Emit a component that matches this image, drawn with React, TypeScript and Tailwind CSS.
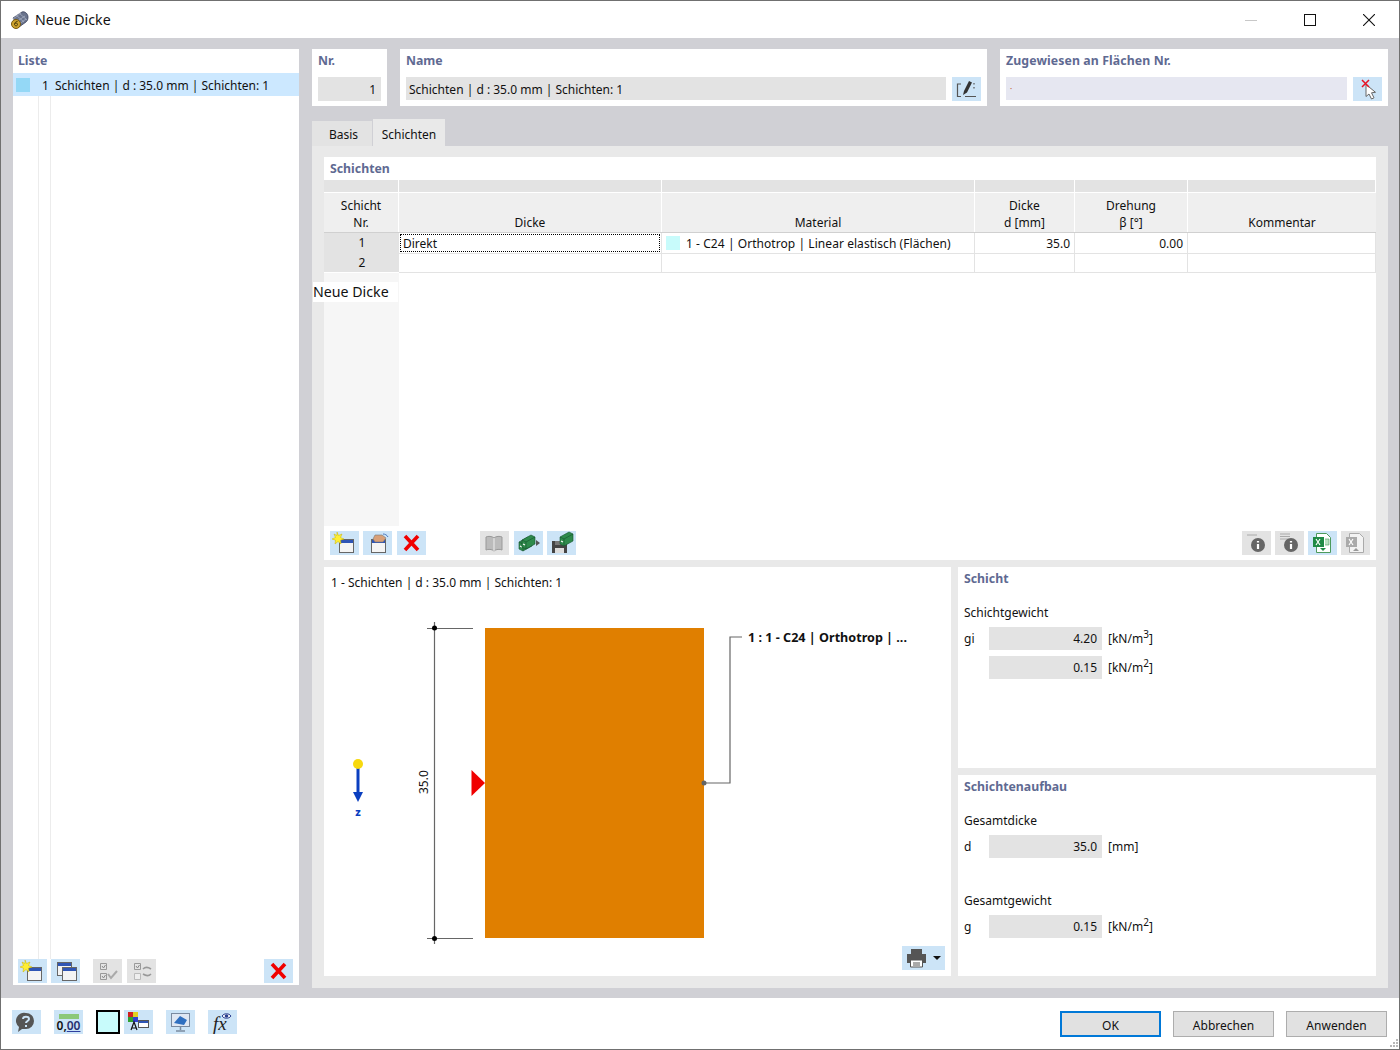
import type { ReactNode } from "react";

const sectionTitle = "text-[12.3px] font-bold text-[#5f6a92]";

function IconBtn({ children, off, className }: { children: ReactNode; off?: boolean; className?: string }) {
  return (
    <div className={`flex h-6 w-[29px] shrink-0 items-center justify-center ${off ? "bg-[#e3e3e3]" : "bg-[#cce4f7]"} ${className ?? ""}`}>
      <svg width="29" height="24" viewBox="0 0 29 24">
        {children}
      </svg>
    </div>
  );
}

const Win = ({ x = 9, y = 8 }: { x?: number; y?: number }) => (
  <g>
    <rect x={x + 0.5} y={y + 0.5} width="14" height="13" fill="#f4f4f4" stroke="#666" />
    <rect x={x + 1} y={y + 1} width="13" height="3" fill="#2f55b5" />
  </g>
);

const Star = () => <path d="M7 1l1.500 3.500L12 3l-1.500 3.500L14 8l-3.500 1.200L11 13 8 10.500 5 13l.5-3.800L2 8l3.500-1.500L4 3l3 1.500z" fill="#ffee33" stroke="#c9b400" strokeWidth="0.5" />;

const NewIcon = () => (
  <IconBtn>
    <Win />
    <Star />
  </IconBtn>
);

const RedX = ({ className }: { className?: string }) => (
  <IconBtn className={className}>
    <path d="M8 5l13 14M21 5L8 19" stroke="#f00000" strokeWidth="3.600" />
  </IconBtn>
);

const Drawer = ({ x, y }: { x: number; y: number }) => (
  <g transform={`translate(${x} ${y})`}>
    <path d="M0 5l9-5 4 2v7l-9 5-4-2z" fill="#2e8b4c" stroke="#14532d" strokeWidth="0.600" />
    <path d="M0 5l4 2v7M4 7l9-5" fill="none" stroke="#14532d" strokeWidth="0.600" />
    <path d="M1 9l2 1" stroke="#fff" strokeWidth="1.200" />
  </g>
);

const InfoIcon = ({ lines }: { lines: string }) => (
  <IconBtn off>
    <path d={lines} stroke="#aaa" />
    <circle cx="16" cy="14" r="7" fill="#666" />
    <path d="M16 10v1.500M16 13v5" stroke="#fff" strokeWidth="2.200" />
  </IconBtn>
);

const Field = ({ value }: { value: string }) => (
  <div className="flex h-[23px] w-[113px] items-center justify-end bg-[#e3e3e3] pr-[5px]">{value}</div>
);

const Unit = ({ base, sup }: { base: string; sup?: string }) => (
  <span className="ml-[6px]">
    [{base}
    {sup && <sup className="text-[10px]">{sup}</sup>}]
  </span>
);

function TableRow({ no, cells }: { no: string; cells: ReactNode[] }) {
  return (
    <div className="grid h-5 shrink-0 grid-cols-[75px_263px_313px_100px_113px_188px]">
      <div className="flex items-center justify-center border-b border-white bg-[#e3e3e3] pl-px">{no}</div>
      {cells.map((c, i) => (
        <div key={i} className="flex items-center border-r border-b border-[#e3e3e3]">
          {c}
        </div>
      ))}
    </div>
  );
}

function Diagram() {
  return (
    <svg width="627" height="354" viewBox="0 0 627 354" className="block shrink-0" fontFamily="'Noto Sans', sans-serif" fontSize="12">
      <path d="M110.500 30v322" stroke="#666" strokeWidth="1.200" />
      <path d="M103 36.500h46M103 346.500h46" stroke="#666" strokeWidth="1.200" />
      <circle cx="110.500" cy="36" r="2.500" fill="#000" />
      <circle cx="110.500" cy="346.500" r="2.500" fill="#000" />
      <text transform="translate(104 202) rotate(-90)" fill="#111">35.0</text>
      <rect x="161" y="36" width="219" height="310" fill="#e07f00" />
      <path d="M147.500 178l13.500 13-13.500 13z" fill="#f00000" />
      <path d="M380 191h26V45h12" fill="none" stroke="#666" strokeWidth="1.200" />
      <circle cx="380" cy="191" r="2.500" fill="#666" />
      <text x="424" y="50" fontWeight="700" fontSize="12.600" fill="#111">1 : 1 - C24 | Orthotrop | ...</text>
      <path d="M34 175v26" stroke="#0a3fc0" strokeWidth="3" />
      <path d="M29 200h10l-5 10z" fill="#0a3fc0" />
      <circle cx="34" cy="172" r="5" fill="#f7d90f" />
      <text x="34" y="224" textAnchor="middle" fontWeight="800" fontSize="11" fill="#0a3fc0">z</text>
    </svg>
  );
}

export default function App() {
  return (
    <div className="flex h-[1050px] w-[1400px] flex-col overflow-hidden border border-[#707070] bg-white font-['Noto_Sans',sans-serif] text-[12px] text-[#111]">
      {/* title bar */}
      <div className="flex h-[37px] shrink-0 items-center pl-[9px]">
        <svg width="20" height="20" viewBox="0 0 20 20">
          <path d="M3 8l9-6c3-1 6 2 6 5s-1 4-2 5l-7 5z" fill="#69738c" stroke="#39405a" strokeWidth="0.800" />
          <path d="M6 5l8 7M9 3l8 7M3 9l8-6M6 12l9-6M8 15l8-6" stroke="#aeb6c8" strokeWidth="0.700" />
          <circle cx="6" cy="14" r="4.500" fill="#cfa42e" stroke="#7a5a10" />
          <path d="M7.500 11.500c-2 0-3 1.500-3 3s3 2 3 0-2-1.500-3-.5" fill="none" stroke="#4a3a08" />
        </svg>
        <span className="ml-[5px] text-[14.2px]">Neue Dicke</span>
        <div className="ml-auto flex items-center">
          <svg width="12" height="12" viewBox="0 0 12 12" className="mr-[47px]">
            <path d="M0 6.500h12" stroke="#c8c8c8" />
          </svg>
          <svg width="12" height="12" viewBox="0 0 12 12" className="mr-[47px]">
            <rect x="0.500" y="0.500" width="11" height="11" fill="none" stroke="#111" />
          </svg>
          <svg width="12" height="12" viewBox="0 0 12 12" className="mr-[24px]">
            <path d="M0 0l12 12M12 0L0 12" stroke="#111" strokeWidth="1.100" />
          </svg>
        </div>
      </div>

      {/* main area */}
      <div className="flex h-[960px] shrink-0 gap-[13px] bg-[#d0d0d5] pt-[11px] pl-[12px]">
        {/* list */}
        <div className="flex h-[936px] w-[286px] flex-col bg-white">
          <div className={`${sectionTitle} flex h-6 items-center pl-[5px]`}>Liste</div>
          <div className="flex h-[23px] items-center bg-[#cce8ff]">
            <div className="ml-[3px] h-[14px] w-[14px] bg-[#94d8f6]" />
            <span className="ml-[12px] w-[13px] pt-[2px]">1</span>
            <span className="pt-[2px]">Schichten | d : 35.0 mm | Schichten: 1</span>
          </div>
          <div className="ml-[25px] h-[863px] w-[13px] border-x border-[#ececec]" />
          <div className="flex gap-1 pr-[6px] pl-[5px]">
            <NewIcon />
            <IconBtn>
              <Win x={6} y={3} />
              <Win x={11} y={8} />
            </IconBtn>
            <IconBtn off className="ml-[9px]">
              <path d="M7.500 4.500h6v6h-6zM7.500 14.500h6v6h-6z" fill="none" stroke="#999" />
              <path d="M9 7l1.500 2 2-3M9 17l1.500 2 2-3" fill="none" stroke="#888" />
              <path d="M15 15l3 4 6-7" fill="none" stroke="#aaa" strokeWidth="2" />
            </IconBtn>
            <IconBtn off className="ml-[1px]">
              <path d="M7.500 4.500h6v6h-6z" fill="none" stroke="#999" />
              <path d="M9 7l1.500 2 2-3" fill="none" stroke="#888" />
              <path d="M7.500 14.500h6v6h-6z" fill="#eee" stroke="#bbb" />
              <path d="M16 10c2-2 5-2 8 0M24 15c-2 2-5 2-8 0" fill="none" stroke="#999" strokeWidth="1.600" />
            </IconBtn>
            <RedX className="ml-auto" />
          </div>
        </div>

        {/* right column */}
        <div className="flex w-[1076px] flex-col">
          <div className="flex h-[57px] gap-[13px]">
            <div className="w-[75px] bg-white px-[6px]">
              <div className={`${sectionTitle} flex h-6 items-center`}>Nr.</div>
              <div className="mt-1 flex h-6 items-center justify-end bg-[#e3e3e3] pt-px pr-[5px]">1</div>
            </div>
            <div className="w-[587px] bg-white px-[6px]">
              <div className={`${sectionTitle} flex h-6 items-center`}>Name</div>
              <div className="mt-1 flex items-start gap-[6px]">
                <div className="flex h-[23px] w-[540px] items-center bg-[#e3e3e3] pt-[3px] pl-[3px]">Schichten | d : 35.0 mm | Schichten: 1</div>
                <IconBtn>
                  <path d="M9 7H5.500v12.500H9M13 19.500h11M22 6v1.500M22 10v1.500" fill="none" stroke="#555" strokeWidth="1.200" />
                  <path d="M11 18l1-4 5-10 3 1.500-5 10z" fill="#333" />
                </IconBtn>
              </div>
            </div>
            <div className="w-[388px] bg-white px-[6px]">
              <div className={`${sectionTitle} flex h-6 items-center tracking-[0.1px]`}>Zugewiesen an Flächen Nr.</div>
              <div className="mt-1 flex items-start gap-[6px]">
                <div className="flex h-[23px] w-[341px] items-center bg-[#e6e7f1] pl-[4px] text-[8px] text-[#c05030]">·</div>
                <IconBtn>
                  <path d="M13 7.500v12l3-2.500 2.500 5 2.500-1.200-2.500-5 4-.5z" fill="#fff" stroke="#666" />
                  <path d="M9 3l7 7M16 3L9 10" stroke="#e81123" strokeWidth="1.500" />
                </IconBtn>
              </div>
            </div>
          </div>

          {/* tabs */}
          <div className="mt-[13px] flex h-[27px] items-end gap-px">
            <div className="flex h-[25px] w-[60px] items-center justify-center bg-[#e3e3e3] pt-[2px] pl-[3px]">Basis</div>
            <div className="flex h-[27px] w-[72px] items-center justify-center bg-[#e9e9e9] pt-1">Schichten</div>
          </div>

          <div className="relative flex h-[842px] flex-col gap-[7px] bg-[#e9e9e9] p-3 pt-[11px]">
            <div className="flex h-[403px] flex-col bg-white">
              <div className={`${sectionTitle} flex h-[23px] shrink-0 items-center pt-[2px] pl-[6px]`}>Schichten</div>
              <div className="grid h-[13px] shrink-0 grid-cols-[75px_263px_313px_100px_113px_188px] border-b border-white bg-[#e3e3e3]">
                {[0, 1, 2, 3, 4, 5].map((i) => (
                  <div key={i} className="border-r border-white" />
                ))}
              </div>
              <div className="grid h-10 shrink-0 grid-cols-[75px_263px_313px_100px_113px_188px] border-b border-[#d0d0d0] bg-[#efefef] text-center leading-[17px]">
                <div className="border-r border-white pt-[4px]">
                  Schicht
                  <br />
                  Nr.
                </div>
                <div className="flex items-end justify-center border-r border-white pb-px">Dicke</div>
                <div className="flex items-end justify-center border-r border-white pb-px">Material</div>
                <div className="border-r border-white pt-[4px]">
                  Dicke
                  <br />d [mm]
                </div>
                <div className="border-r border-white pt-[4px]">
                  Drehung
                  <br />β [°]
                </div>
                <div className="flex items-end justify-center pb-px">Kommentar</div>
              </div>
              <TableRow
                no="1"
                cells={[
                  <div className="ml-px flex h-[18px] w-[260px] items-center border border-dotted border-black pt-[2px] pl-[2px]">Direkt</div>,
                  <div className="flex items-center pl-[4px]">
                    <div className="h-[14px] w-[14px] bg-[#c8fbfb]" />
                    <span className="ml-[6px] pt-[2px] tracking-[0.06px]">1 - C24 | Orthotrop | Linear elastisch (Flächen)</span>
                  </div>,
                  <div className="w-full pt-[2px] pr-[4px] text-right">35.0</div>,
                  <div className="w-full pt-[2px] pr-[4px] text-right">0.00</div>,
                  <div />,
                ]}
              />
              <TableRow no="2" cells={[<div />, <div />, <div />, <div />, <div />]} />
              <div className="h-[253px] w-[75px] shrink-0 bg-[#f6f6f6]" />
              <div className="flex items-center gap-1 pt-[5px] pl-[6px]">
                <NewIcon />
                <IconBtn>
                  <Win x={8} y={8} />
                  <path d="M10 8l2-4h7l4 3-3 4h-8z" fill="#d9a078" stroke="#777" strokeWidth="0.600" />
                  <path d="M20 3c2 0 4 1 5 3" fill="none" stroke="#4a78c0" />
                </IconBtn>
                <RedX className="ml-[1px]" />
                <IconBtn off className="ml-[50px]">
                  <path d="M14 7c-2-2-6-2-8-1v13c2-1 6-1 8 1 2-2 6-2 8-1V6c-2-1-6-1-8 1z" fill="#bbb" stroke="#999" />
                  <path d="M14 7v13" stroke="#eee" />
                </IconBtn>
                <IconBtn className="ml-[1px]">
                  <Drawer x={5} y={6} />
                  <Drawer x={8} y={4} />
                  <path d="M22 9l4 3-4 3z" fill="#555" />
                </IconBtn>
                <IconBtn>
                  <path d="M5 10h13l2 2v10H5z" fill="#444" />
                  <rect x="8" y="17" width="9" height="5" fill="#ddd" />
                  <rect x="8" y="10" width="7" height="4" fill="#777" />
                  <Drawer x={13} y={1} />
                </IconBtn>
                <div className="ml-auto flex gap-1 pr-[6px]">
                  <InfoIcon lines="M5 4h10" />
                  <InfoIcon lines="M5 3h10M5 5.500h10M5 8h8" />
                  <IconBtn>
                    <path d="M8.500 2.500h10l4 4v15h-14z" fill="#fff" stroke="#4c9a5c" />
                    <rect x="5" y="6" width="11" height="10" fill="#1f8a45" />
                    <path d="M8 8l4 6M12 8l-4 6" stroke="#fff" strokeWidth="1.200" />
                    <path d="M17 8h4v6h-4" fill="#b8e0c0" stroke="#4c9a5c" strokeWidth="0.600" />
                    <path d="M12 17h6l-3 3z" fill="#1f8a45" />
                  </IconBtn>
                  <IconBtn off>
                    <path d="M8.500 2.500h10l4 4v15h-14z" fill="#f3f3f3" stroke="#aaa" />
                    <rect x="5" y="6" width="11" height="10" fill="#aaa" />
                    <path d="M8 8l4 6M12 8l-4 6" stroke="#fff" strokeWidth="1.200" />
                    <path d="M12 20h6l-3-3z" fill="#999" />
                  </IconBtn>
                </div>
              </div>
            </div>

            <div className="flex h-[409px] gap-[7px]">
              <div className="flex w-[627px] flex-col bg-white">
                <div className="flex h-[25px] shrink-0 items-end pl-[7px]">1 - Schichten | d : 35.0 mm | Schichten: 1</div>
                <Diagram />
                <div className="flex justify-end pr-[6px]">
                  <div className="flex h-6 w-[43px] items-center justify-center gap-[6px] bg-[#cce4f7]">
                    <svg width="21" height="20" viewBox="0 0 21 20">
                      <path d="M5 1h11v5H5z" fill="#555" />
                      <path d="M1 6h19v9h-3v-3H4v3H1z" fill="#555" />
                      <path d="M4.500 12h12v7h-12z" fill="#fff" stroke="#555" />
                      <path d="M7 15h7M7 17h7" stroke="#555" />
                    </svg>
                    <svg width="8" height="4" viewBox="0 0 8 4">
                      <path d="M0 0h8L4 4z" fill="#111" />
                    </svg>
                  </div>
                </div>
              </div>

              <div className="flex w-[418px] flex-col gap-[7px]">
                <div className="flex h-[201px] flex-col bg-white pl-[6px]">
                  <div className={`${sectionTitle} flex h-[23px] items-center pt-[2px]`}>Schicht</div>
                  <div className="mt-[11px] flex h-[23px] items-center">Schichtgewicht</div>
                  <div className="mt-[3px] flex items-center">
                    <span className="w-[25px]">gi</span>
                    <Field value="4.20" />
                    <Unit base="kN/m" sup="3" />
                  </div>
                  <div className="mt-[6px] flex items-center">
                    <span className="w-[25px]" />
                    <Field value="0.15" />
                    <Unit base="kN/m" sup="2" />
                  </div>
                </div>
                <div className="flex h-[201px] flex-col bg-white pl-[6px]">
                  <div className={`${sectionTitle} flex h-[23px] items-center pt-[2px]`}>Schichtenaufbau</div>
                  <div className="mt-[11px] flex h-[23px] items-center">Gesamtdicke</div>
                  <div className="mt-[3px] flex items-center">
                    <span className="w-[25px]">d</span>
                    <Field value="35.0" />
                    <Unit base="mm" />
                  </div>
                  <div className="mt-[31px] flex h-[23px] items-center">Gesamtgewicht</div>
                  <div className="mt-[3px] flex items-center">
                    <span className="w-[25px]">g</span>
                    <Field value="0.15" />
                    <Unit base="kN/m" sup="2" />
                  </div>
                </div>
              </div>
            </div>

            {/* stray label on top of the grid */}
            <div className="absolute top-[136px] left-px flex h-5 w-[85px] items-center bg-white text-[14.2px]">Neue Dicke</div>
          </div>
        </div>
      </div>

      {/* footer */}
      <div className="relative flex flex-1 items-start pt-[12px] pl-[11px]">
        <IconBtn>
          <path d="M14 3a8 8 0 0 1 0 16H10l-4 3 1-5a8 8 0 0 1 7-14z" fill="#555" />
          <path d="M11 9c0-3 6-3 6 0 0 2-3 2-3 4M14 15v2" fill="none" stroke="#cce4f7" strokeWidth="2" />
        </IconBtn>
        <div className="ml-[13px] flex h-6 w-[29px] flex-col items-center justify-end bg-[#cce4f7] pb-px">
          <div className="h-[5px] w-5 bg-[#8cc878]" />
          <span className="text-[12px] leading-[14px] font-semibold">
            0,<span className="text-[#27306f] underline decoration-[#2f3f9f]">00</span>
          </span>
        </div>
        <div className="ml-[13px] h-6 w-6 border-2 border-black bg-[#c8fbfb]" />
        <IconBtn className="ml-1">
          <rect x="4" y="2" width="5" height="5" fill="#d02020" />
          <rect x="9" y="2" width="5" height="5" fill="#e0d020" />
          <rect x="4" y="7" width="5" height="5" fill="#30a030" />
          <rect x="9" y="7" width="5" height="5" fill="#3040d0" />
          <path d="M7 20l3-8 3 8M8 18h4" fill="none" stroke="#111" strokeWidth="1.200" />
          <rect x="14.500" y="10.500" width="10" height="7" fill="#fff" stroke="#555" />
          <rect x="15" y="11" width="9" height="2" fill="#2f55b5" />
        </IconBtn>
        <IconBtn className="ml-[13px]">
          <rect x="5.500" y="3.500" width="18" height="13" fill="#dfe7f3" stroke="#7a8aa0" />
          <path d="M8 13l6-7 7 4-3 5z" fill="#2f6fc0" />
          <path d="M14.500 17v3M10 21h9" stroke="#7a8aa0" strokeWidth="1.500" />
        </IconBtn>
        <IconBtn className="ml-[13px]">
          <text x="5" y="20" fontFamily="'Liberation Serif', serif" fontStyle="italic" fontSize="19" fill="#222">
            fx
          </text>
          <path d="M14 6c2-3 7-3 9 0-2 3-7 3-9 0z" fill="#fff" stroke="#2a3f8f" />
          <circle cx="18.500" cy="6" r="1.800" fill="#2a3f8f" />
        </IconBtn>

        <div className="mt-px ml-auto flex gap-3 pr-[12px]">
          <div className="flex h-[26px] w-[101px] items-center justify-center border-2 border-[#0078d7] bg-[#e1e1e1] pt-1">OK</div>
          <div className="flex h-[26px] w-[101px] items-center justify-center border border-[#adadad] bg-[#e1e1e1] pt-1">Abbrechen</div>
          <div className="flex h-[26px] w-[101px] items-center justify-center border border-[#adadad] bg-[#e1e1e1] pt-1">Anwenden</div>
        </div>
        <svg width="10" height="10" viewBox="0 0 10 10" className="absolute right-0 bottom-0">
          <path d="M7 0h2v2H7zM4 3h2v2H4zM7 3h2v2H7zM1 6h2v2H1zM4 6h2v2H4zM7 6h2v2H7z" fill="#b8b8b8" />
        </svg>
      </div>
    </div>
  );
}
